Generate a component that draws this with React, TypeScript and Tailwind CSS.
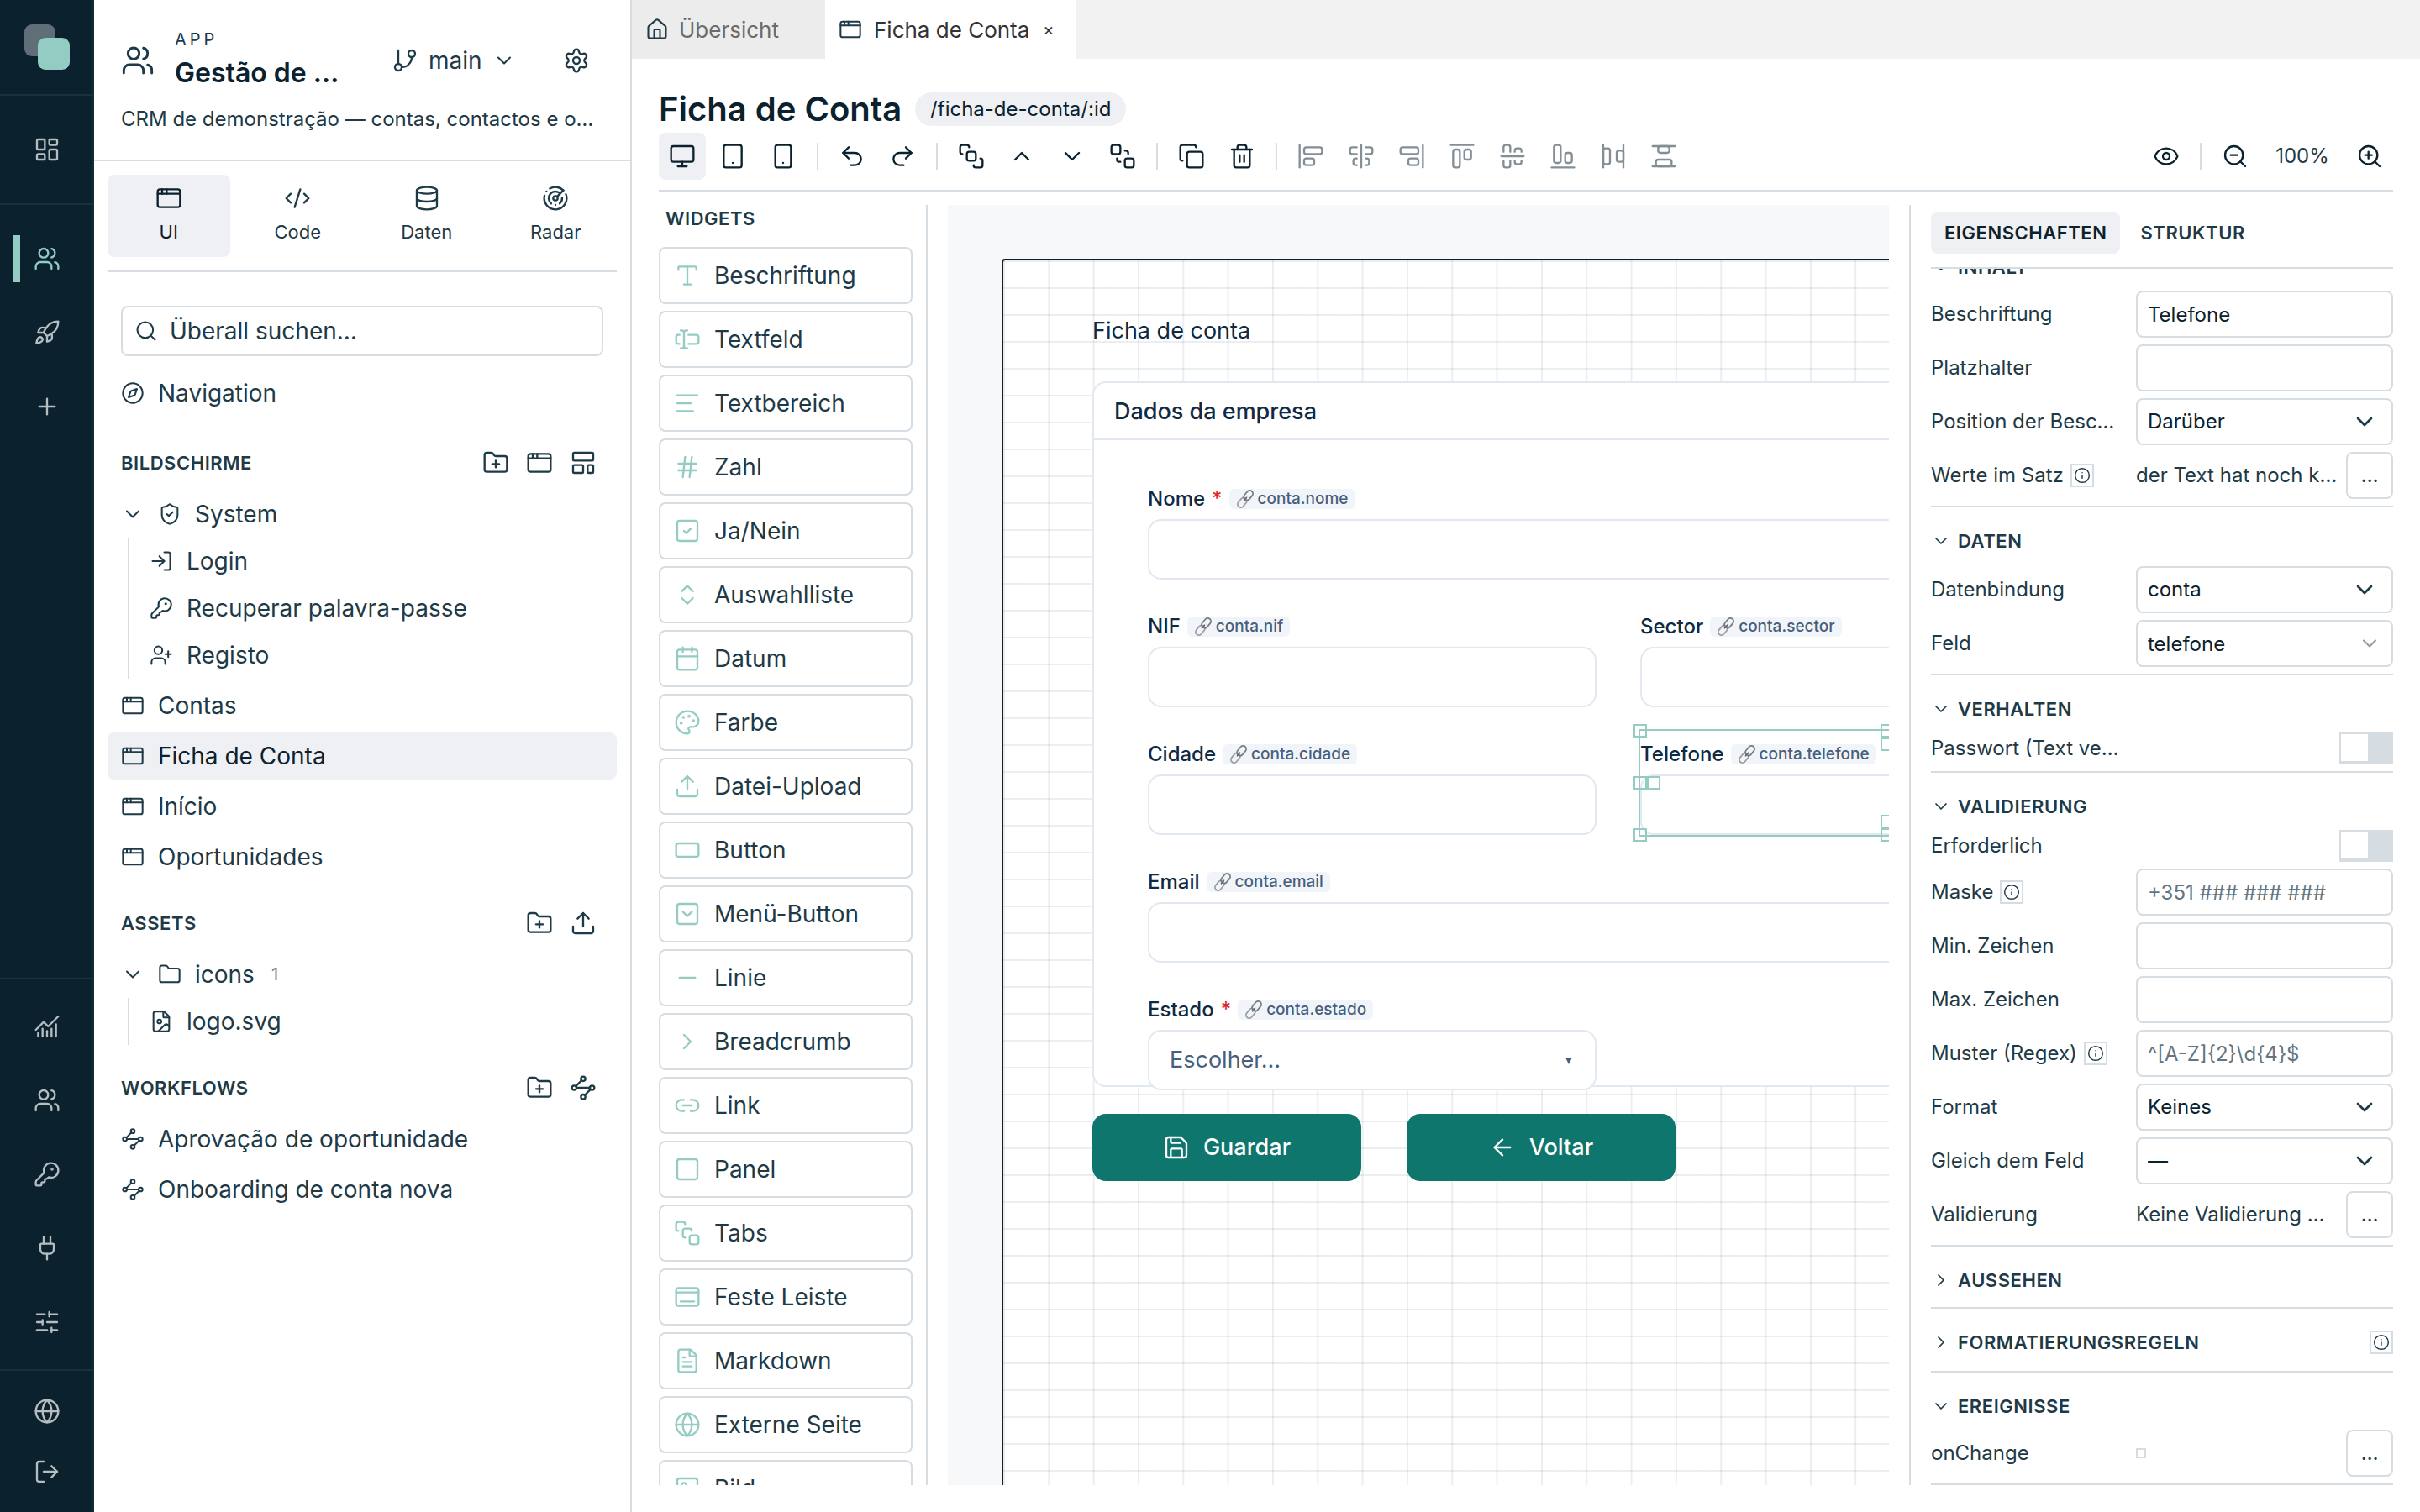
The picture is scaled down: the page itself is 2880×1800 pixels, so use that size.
import type { ReactNode } from 'react'
import {
  AlignCenterHorizontal,
  AlignCenterVertical,
  AlignEndHorizontal,
  AlignEndVertical,
  AlignHorizontalSpaceBetween,
  AlignStartHorizontal,
  AlignStartVertical,
  AlignVerticalSpaceBetween,
  AppWindow,
  ArrowLeft,
  BringToFront,
  Calendar,
  ChartNoAxesCombined,
  ChevronDown,
  ChevronRight,
  ChevronsUpDown,
  ChevronUp,
  CodeXml,
  Compass,
  Copy,
  createLucideIcon,
  Database,
  Dock,
  Eye,
  FileImage,
  FileText,
  Folder,
  FolderPlus,
  GitBranch,
  Globe,
  Hash,
  House,
  Image,
  Info,
  KeyRound,
  LayoutDashboard,
  LayoutTemplate,
  Link2,
  LogIn,
  LogOut,
  type LucideIcon,
  Minus,
  Monitor,
  Palette,
  Plug,
  Plus,
  Radar,
  RectangleHorizontal,
  Redo2,
  Rocket,
  Save,
  Search,
  SendToBack,
  Settings,
  ShieldCheck,
  SlidersHorizontal,
  Smartphone,
  Square,
  SquareCheck,
  SquareChevronDown,
  SquareStack,
  Tablet,
  TextAlignStart,
  TextCursorInput,
  Trash2,
  Type,
  Undo2,
  Upload,
  UserPlus,
  Users,
  ZoomIn,
  ZoomOut,
} from 'lucide-react'

const STROKE = 1.75

const WorkflowIcon = createLucideIcon('workflow-path', [
  ['path', { d: 'm10.586 5.414-5.172 5.172', key: 'a' }],
  ['path', { d: 'm18.586 13.414-5.172 5.172', key: 'b' }],
  ['path', { d: 'M6 12h12', key: 'c' }],
  ['circle', { cx: '12', cy: '20', r: '2', key: 'd' }],
  ['circle', { cx: '12', cy: '4', r: '2', key: 'e' }],
  ['circle', { cx: '20', cy: '12', r: '2', key: 'f' }],
  ['circle', { cx: '4', cy: '12', r: '2', key: 'g' }],
])

/* ---------- Rail ---------- */

function RailButton({ icon: Icon, label, active }: { icon: LucideIcon; label: string; active?: boolean }) {
  return (
    <button
      aria-label={label}
      className={
        active
          ? 'relative flex h-14 w-full items-center justify-center text-[#94ccc4]'
          : 'flex h-14 w-full items-center justify-center text-[#b6bdc1]'
      }
    >
      {active && <span className="absolute inset-y-0 left-4 w-2 bg-[#94ccc4]" />}
      <Icon size={32} strokeWidth={STROKE} />
    </button>
  )
}

function Rail() {
  return (
    <nav className="flex w-28 shrink-0 flex-col bg-[#0b222e] shadow-[inset_-2px_0_0_#102c39]">
      <div className="flex h-[114px] items-center justify-center border-b-2 border-[#16323f]">
        <svg width="54" height="54" viewBox="0 0 54 54" aria-hidden="true">
          <rect width="37" height="38" rx="9" fill="#606e77" />
          <rect x="16" y="16" width="38" height="38" rx="9" fill="#94ccc4" />
        </svg>
      </div>
      <div className="flex h-[130px] items-center border-b-2 border-[#16323f]">
        <RailButton icon={LayoutDashboard} label="Dashboard" />
      </div>
      <div className="flex flex-1 flex-col gap-8 pt-9">
        <RailButton icon={Users} label="Gestão de contas" active />
        <RailButton icon={Rocket} label="Deploy" />
        <RailButton icon={Plus} label="Neue App" />
      </div>
      <div className="flex flex-col gap-8 border-t-2 border-[#16323f] py-7">
        <RailButton icon={ChartNoAxesCombined} label="Statistik" />
        <RailButton icon={Users} label="Benutzer" />
        <RailButton icon={KeyRound} label="Schlüssel" />
        <RailButton icon={Plug} label="Integrationen" />
        <RailButton icon={SlidersHorizontal} label="Einstellungen" />
      </div>
      <div className="flex flex-col gap-4 border-t-2 border-[#16323f] py-5">
        <RailButton icon={Globe} label="Sprache" />
        <RailButton icon={LogOut} label="Abmelden" />
      </div>
    </nav>
  )
}

/* ---------- Sidebar ---------- */

const sidebarTabs = [
  { label: 'UI', icon: AppWindow },
  { label: 'Code', icon: CodeXml },
  { label: 'Daten', icon: Database },
  { label: 'Radar', icon: Radar },
]

function SectionHeader({ title, icons }: { title: string; icons: { icon: LucideIcon; label: string }[] }) {
  return (
    <div className="mt-6 mb-1.5 flex h-[54px] items-center justify-between pr-6 pl-4">
      <h2 className="text-[22px] font-semibold tracking-wide">{title}</h2>
      <div className="flex gap-5">
        {icons.map(({ icon: Icon, label }) => (
          <button key={label} aria-label={label}>
            <Icon size={32} strokeWidth={STROKE} />
          </button>
        ))}
      </div>
    </div>
  )
}

function TreeRow({ icon: Icon, label, active }: { icon: LucideIcon; label: string; active?: boolean }) {
  return (
    <a
      href="#"
      className={
        active
          ? 'flex h-14 items-center gap-4 rounded-lg bg-[#eff0f4] px-4 text-[#0b222e]'
          : 'flex h-14 items-center gap-4 px-4'
      }
    >
      <Icon size={28} strokeWidth={STROKE} className="text-[#1e3a47]" />
      {label}
    </a>
  )
}

function TreeFolder({ icon: Icon, label, count, children }: { icon: LucideIcon; label: string; count?: number; children: ReactNode }) {
  return (
    <div>
      <button className="flex h-14 w-full items-center gap-4 px-4">
        <ChevronDown size={28} strokeWidth={STROKE} />
        <Icon size={28} strokeWidth={STROKE} />
        {label}
        {count && <span className="ml-1 text-[20px] text-[#6b7c86]">{count}</span>}
      </button>
      <div className="ml-6 border-l-2 border-[#d5dce2] pl-2">{children}</div>
    </div>
  )
}

function Sidebar() {
  return (
    <aside className="flex w-[640px] shrink-0 flex-col border-r-2 border-[#d5dce2] text-[28px]">
      <header className="h-48 border-b-2 border-[#d5dce2] px-8 pt-8">
        <div className="flex h-20 items-center">
          <Users size={40} strokeWidth={STROKE} />
          <div className="ml-6 w-[240px]">
            <p className="mb-0.5 text-[20px] leading-7 tracking-[4px]">APP</p>
            <h1 className="text-[32px] leading-[48px] font-semibold whitespace-nowrap text-[#0b222e]">Gestão de …</h1>
          </div>
          <button className="ml-[18px] flex items-center gap-3">
            <GitBranch size={32} strokeWidth={STROKE} />
            main
            <ChevronDown size={28} strokeWidth={STROKE} />
          </button>
          <button aria-label="Einstellungen" className="mr-4 ml-auto">
            <Settings size={32} strokeWidth={STROKE} />
          </button>
        </div>
        <p className="mt-3 truncate text-[24px] leading-9">CRM de demonstração — contas, contactos e o…</p>
      </header>

      <div className="px-4 pt-4">
        <div className="grid grid-cols-4 gap-2 border-b-2 border-[#d5dce2] pb-4">
          {sidebarTabs.map(({ label, icon: Icon }, i) => (
            <button
              key={label}
              className={
                i === 0
                  ? 'flex h-[98px] flex-col items-center gap-2 rounded-lg bg-[#eff0f4] pt-3 text-[22px] leading-8 text-[#0b222e]'
                  : 'flex h-[98px] flex-col items-center gap-2 rounded-lg pt-3 text-[22px] leading-8'
              }
            >
              <Icon size={32} strokeWidth={STROKE} />
              {label}
            </button>
          ))}
        </div>

        <label className="mx-4 mt-10 mb-4 flex h-[60px] items-center gap-3.5 rounded-lg border-2 border-[#d5dce2] px-3.5">
          <Search size={28} strokeWidth={STROKE} />
          <input
            type="search"
            aria-label="Überall suchen"
            placeholder="Überall suchen…"
            className="min-w-0 flex-1 outline-none placeholder:text-[#1e3a47]"
          />
        </label>

        <div className="pb-1">
          <TreeRow icon={Compass} label="Navigation" />
        </div>

        <SectionHeader
          title="BILDSCHIRME"
          icons={[
            { icon: FolderPlus, label: 'Neuer Ordner' },
            { icon: AppWindow, label: 'Neuer Bildschirm' },
            { icon: LayoutTemplate, label: 'Neue Vorlage' },
          ]}
        />
        <div className="flex flex-col gap-1">
          <TreeFolder icon={ShieldCheck} label="System">
            <TreeRow icon={LogIn} label="Login" />
            <TreeRow icon={KeyRound} label="Recuperar palavra-passe" />
            <TreeRow icon={UserPlus} label="Registo" />
          </TreeFolder>
          <TreeRow icon={AppWindow} label="Contas" />
          <TreeRow icon={AppWindow} label="Ficha de Conta" active />
          <TreeRow icon={AppWindow} label="Início" />
          <TreeRow icon={AppWindow} label="Oportunidades" />
        </div>

        <SectionHeader
          title="ASSETS"
          icons={[
            { icon: FolderPlus, label: 'Neuer Asset-Ordner' },
            { icon: Upload, label: 'Hochladen' },
          ]}
        />
        <TreeFolder icon={Folder} label="icons" count={1}>
          <TreeRow icon={FileImage} label="logo.svg" />
        </TreeFolder>

        <SectionHeader
          title="WORKFLOWS"
          icons={[
            { icon: FolderPlus, label: 'Neuer Workflow-Ordner' },
            { icon: WorkflowIcon, label: 'Neuer Workflow' },
          ]}
        />
        <div className="flex flex-col gap-1">
          <TreeRow icon={WorkflowIcon} label="Aprovação de oportunidade" />
          <TreeRow icon={WorkflowIcon} label="Onboarding de conta nova" />
        </div>
      </div>
    </aside>
  )
}

/* ---------- Toolbar ---------- */

function ToolButton({ icon: Icon, label, active, disabled }: { icon: LucideIcon; label: string; active?: boolean; disabled?: boolean }) {
  return (
    <button
      aria-label={label}
      disabled={disabled}
      className={
        active
          ? 'flex size-14 items-center justify-center rounded-lg bg-[#eff0f4]'
          : 'flex size-14 items-center justify-center rounded-lg disabled:opacity-50'
      }
    >
      <Icon size={32} strokeWidth={STROKE} />
    </button>
  )
}

function ToolDivider() {
  return <span className="mx-2 h-8 w-0.5 bg-[#d5dce2]" />
}

function Toolbar() {
  return (
    <div className="flex items-center gap-1 border-b-2 border-[#d5dce2] pb-3 text-[#0b222e]">
      <ToolButton icon={Monitor} label="Desktop" active />
      <ToolButton icon={Tablet} label="Tablet" />
      <ToolButton icon={Smartphone} label="Mobil" />
      <ToolDivider />
      <ToolButton icon={Undo2} label="Rückgängig" />
      <ToolButton icon={Redo2} label="Wiederholen" />
      <ToolDivider />
      <ToolButton icon={BringToFront} label="In den Vordergrund" />
      <ToolButton icon={ChevronUp} label="Nach vorne" />
      <ToolButton icon={ChevronDown} label="Nach hinten" />
      <ToolButton icon={SendToBack} label="In den Hintergrund" />
      <ToolDivider />
      <ToolButton icon={Copy} label="Duplizieren" />
      <ToolButton icon={Trash2} label="Löschen" />
      <ToolDivider />
      <ToolButton icon={AlignStartVertical} label="Links ausrichten" disabled />
      <ToolButton icon={AlignCenterVertical} label="Horizontal zentrieren" disabled />
      <ToolButton icon={AlignEndVertical} label="Rechts ausrichten" disabled />
      <ToolButton icon={AlignStartHorizontal} label="Oben ausrichten" disabled />
      <ToolButton icon={AlignCenterHorizontal} label="Vertikal zentrieren" disabled />
      <ToolButton icon={AlignEndHorizontal} label="Unten ausrichten" disabled />
      <ToolButton icon={AlignHorizontalSpaceBetween} label="Horizontal verteilen" disabled />
      <ToolButton icon={AlignVerticalSpaceBetween} label="Vertikal verteilen" disabled />
      <div className="ml-auto flex items-center gap-1">
        <ToolButton icon={Eye} label="Vorschau" />
        <ToolDivider />
        <ToolButton icon={ZoomOut} label="Verkleinern" />
        <span className="w-24 text-center text-[24px] text-[#1e3a47]">100%</span>
        <ToolButton icon={ZoomIn} label="Vergrößern" />
      </div>
    </div>
  )
}

/* ---------- Widget palette ---------- */

const widgets: [string, LucideIcon][] = [
  ['Beschriftung', Type],
  ['Textfeld', TextCursorInput],
  ['Textbereich', TextAlignStart],
  ['Zahl', Hash],
  ['Ja/Nein', SquareCheck],
  ['Auswahlliste', ChevronsUpDown],
  ['Datum', Calendar],
  ['Farbe', Palette],
  ['Datei-Upload', Upload],
  ['Button', RectangleHorizontal],
  ['Menü-Button', SquareChevronDown],
  ['Linie', Minus],
  ['Breadcrumb', ChevronRight],
  ['Link', Link2],
  ['Panel', Square],
  ['Tabs', SquareStack],
  ['Feste Leiste', Dock],
  ['Markdown', FileText],
  ['Externe Seite', Globe],
  ['Bild', Image],
]

function WidgetPalette() {
  return (
    <section className="flex w-80 shrink-0 flex-col gap-2 overflow-hidden border-r-2 border-[#d5dce2] pr-4">
      <h3 className="mb-2.5 pl-2 text-[22px] leading-8 font-semibold tracking-wide">WIDGETS</h3>
      {widgets.map(([label, Icon]) => (
        <button
          key={label}
          className="flex h-[68px] shrink-0 items-center gap-4 rounded-lg border-2 border-[#d5dce2] px-4 text-[28px]"
        >
          <Icon size={32} strokeWidth={STROKE} className="text-[#94ccc4]" />
          {label}
        </button>
      ))}
    </section>
  )
}

/* ---------- Canvas ---------- */

function ChainIcon() {
  return (
    <svg width="22" height="22" viewBox="0 0 22 22" fill="none" aria-hidden="true">
      <g transform="rotate(-50 11 11)">
        <rect x="-1" y="7.25" width="13" height="7.5" rx="3.75" stroke="#9a9ea2" strokeWidth="1.8" />
        <rect x="10" y="7.25" width="13" height="7.5" rx="3.75" stroke="#787c80" strokeWidth="1.8" />
        <path d="M8.5 11h5" stroke="#5d6165" strokeWidth="1.4" strokeLinecap="round" />
      </g>
    </svg>
  )
}

function FieldLabel({ id, label, binding, required }: { id: string; label: string; binding: string; required?: boolean }) {
  return (
    <div className="mb-3 flex h-6 items-center gap-2 text-[24px] font-medium">
      <label htmlFor={id}>
        {label}
        {required && <span className="ml-2 text-[#dc2626]">*</span>}
      </label>
      <span className="flex h-6 items-center gap-1 rounded-md bg-[#f1f5f9] px-2 text-[19px] text-[#475f7c]">
        <ChainIcon />
        {binding}
      </span>
    </div>
  )
}

const inputClass = 'block h-[72px] w-full rounded-2xl border-2 border-[#e2e8f0] bg-white px-6'

function CanvasField({ id, label, required, wide, children }: { id: string; label: string; required?: boolean; wide?: boolean; children?: ReactNode }) {
  return (
    <div className={wide ? 'relative col-span-2' : 'relative'}>
      <FieldLabel id={id} label={label} binding={`conta.${id}`} required={required} />
      <input id={id} className={inputClass} />
      {children}
    </div>
  )
}

const handles = [
  '-top-2 -left-2',
  '-top-2 left-1/2 -translate-x-1/2',
  'top-2 left-1/2 -translate-x-1/2',
  '-top-2 -right-2',
  'top-1/2 -left-2 -translate-y-1/2',
  'top-1/2 left-2 -translate-y-1/2',
  'top-1/2 -right-2 -translate-y-1/2',
  '-bottom-2 -left-2',
  '-bottom-2 left-1/2 -translate-x-1/2',
  'bottom-2 left-1/2 -translate-x-1/2',
  '-bottom-2 -right-2',
]

function SelectionBox() {
  return (
    <div className="pointer-events-none absolute inset-x-0 -top-4 bottom-0 outline-2 outline-[#94ccc4]">
      {handles.map((pos) => (
        <span key={pos} className={`absolute size-4 border-2 border-[#94ccc4] ${pos}`} />
      ))}
    </div>
  )
}

function Canvas() {
  return (
    <section className="ml-6 min-w-0 flex-1 overflow-hidden bg-[#f7f8fa] pt-16 pl-16">
      {/* 36 column design surface */}
      <div className="h-[2160px] w-[1924px] rounded border-2 border-[#0b222e] bg-white bg-[linear-gradient(to_right,rgba(11,34,46,0.08)_2px,transparent_2px),linear-gradient(to_bottom,rgba(11,34,46,0.08)_2px,transparent_2px)] bg-[size:calc(100%/36)_32px] pt-16 pl-[106px] text-[27px] text-[#0f2a43]">
        <p className="mb-10 leading-10">Ficha de conta</p>

        <div className="h-[840px] w-[1306px] rounded-2xl border-2 border-[#e2e8f0] bg-white">
          <h4 className="flex h-[68px] items-center border-b-2 border-[#e2e8f0] px-6 pt-0.5 font-medium">
            Dados da empresa
          </h4>
          <div className="grid grid-cols-[534px_588px] gap-x-[52px] gap-y-11 px-16 pt-[58px]">
            <CanvasField id="nome" label="Nome" required wide />
            <CanvasField id="nif" label="NIF" />
            <CanvasField id="sector" label="Sector" />
            <CanvasField id="cidade" label="Cidade" />
            <CanvasField id="telefone" label="Telefone">
              <SelectionBox />
            </CanvasField>
            <CanvasField id="email" label="Email" wide />
            <div>
              <FieldLabel id="estado" label="Estado" binding="conta.estado" required />
              <div className="relative">
                <select
                  id="estado"
                  className="block h-[72px] w-full appearance-none rounded-2xl border-2 border-[#e2e8f0] bg-white px-6 text-[#475f7c]"
                >
                  <option>Escolher…</option>
                </select>
                <svg className="absolute top-8 right-7" width="10" height="10" viewBox="0 0 10 10" aria-hidden="true">
                  <path d="M1 1h8L5 9z" fill="#475f7c" />
                </svg>
              </div>
            </div>
          </div>
        </div>

        <div className="mt-8 flex gap-[54px] font-medium text-white">
          <button className="flex h-20 w-80 items-center justify-center gap-4 rounded-2xl bg-[#0f766e]">
            <Save size={32} strokeWidth={STROKE} />
            Guardar
          </button>
          <button className="flex h-20 w-80 items-center justify-center gap-4 rounded-2xl bg-[#0f766e]">
            <ArrowLeft size={32} strokeWidth={STROKE} />
            Voltar
          </button>
        </div>
      </div>
    </section>
  )
}

/* ---------- Properties ---------- */

function InfoButton() {
  return (
    <button aria-label="Info" className="flex size-7 shrink-0 items-center justify-center border-2 border-[#d5dce2]">
      <Info size={20} strokeWidth={STROKE} />
    </button>
  )
}

function PropRow({ id, label, info, children }: { id: string; label: string; info?: boolean; children: ReactNode }) {
  return (
    <div className="mb-2 grid grid-cols-[228px_1fr] items-center gap-4">
      <div className="flex items-center gap-2 whitespace-nowrap">
        <label htmlFor={id}>{label}</label>
        {info && <InfoButton />}
      </div>
      {children}
    </div>
  )
}

function PropInput({ id, value, placeholder }: { id: string; value?: string; placeholder?: string }) {
  return (
    <input
      id={id}
      defaultValue={value}
      placeholder={placeholder}
      className="h-14 w-full min-w-0 rounded-lg border-2 border-[#d5dce2] px-3 text-[#0b222e] placeholder:text-[#64757f]"
    />
  )
}

function PropSelect({ id, value }: { id: string; value: string }) {
  return (
    <div className="relative">
      <select id={id} className="block h-14 w-full appearance-none rounded-lg border-2 border-[#d5dce2] bg-white px-3 text-[#0b222e]">
        <option>{value}</option>
      </select>
      <ChevronDown size={32} strokeWidth={2} className="pointer-events-none absolute top-3 right-[18px]" />
    </div>
  )
}

function PropToggle({ id }: { id: string }) {
  return (
    <input
      id={id}
      type="checkbox"
      className="block h-[38px] w-16 appearance-none justify-self-end border-2 border-[#d5dce2] bg-[#d5dce2] before:block before:size-8 before:bg-white"
    />
  )
}

function PropMore({ id, children }: { id: string; children?: ReactNode }) {
  return (
    <div className="flex items-center justify-between whitespace-nowrap">
      {children}
      <button id={id} className="size-14 rounded-lg border-2 border-[#d5dce2]">
        …
      </button>
    </div>
  )
}

function PropSection({ title, children }: { title: string; children: ReactNode }) {
  return (
    <div className="border-b-2 border-[#d5dce2]">
      <button className="flex items-center gap-2 pt-6 pb-3 text-[22px] leading-8 font-semibold tracking-wide">
        <ChevronDown size={24} strokeWidth={STROKE} />
        {title}
      </button>
      {children}
    </div>
  )
}

function Properties() {
  return (
    <aside className="ml-6 flex w-[576px] shrink-0 flex-col border-l-2 border-[#d5dce2] pt-2 pl-6 text-[24px]">
      <div className="flex gap-2 border-b-2 border-[#d5dce2] pb-4 text-[22px] font-semibold tracking-wide">
        <button className="h-[50px] rounded-lg bg-[#eff0f4] px-4 text-[#0b222e]">EIGENSCHAFTEN</button>
        <button className="h-[50px] rounded-lg px-4">STRUKTUR</button>
      </div>

      <div className="min-h-0 flex-1 overflow-hidden">
        {/* list is scrolled so that the first heading is partly hidden */}
        <div className="-mt-[42px]">
          <PropSection title="INHALT">
            <PropRow id="p-label" label="Beschriftung">
              <PropInput id="p-label" value="Telefone" />
            </PropRow>
            <PropRow id="p-placeholder" label="Platzhalter">
              <PropInput id="p-placeholder" />
            </PropRow>
            <PropRow id="p-position" label="Position der Besc…">
              <PropSelect id="p-position" value="Darüber" />
            </PropRow>
            <PropRow id="p-values" label="Werte im Satz" info>
              <PropMore id="p-values">der Text hat noch k…</PropMore>
            </PropRow>
          </PropSection>

          <PropSection title="DATEN">
            <div className="pt-0.5">
              <PropRow id="p-binding" label="Datenbindung">
                <PropSelect id="p-binding" value="conta" />
              </PropRow>
            </div>
            <PropRow id="p-field" label="Feld">
              <div className="relative">
                <PropInput id="p-field" value="telefone" />
                <ChevronDown size={28} strokeWidth={STROKE} className="pointer-events-none absolute top-3.5 right-3.5 opacity-50" />
              </div>
            </PropRow>
          </PropSection>

          <PropSection title="VERHALTEN">
            <PropRow id="p-password" label="Passwort (Text ve…">
              <PropToggle id="p-password" />
            </PropRow>
          </PropSection>

          <PropSection title="VALIDIERUNG">
            <PropRow id="p-required" label="Erforderlich">
              <PropToggle id="p-required" />
            </PropRow>
            <PropRow id="p-mask" label="Maske" info>
              <PropInput id="p-mask" placeholder="+351 ### ### ###" />
            </PropRow>
            <PropRow id="p-min" label="Min. Zeichen">
              <PropInput id="p-min" />
            </PropRow>
            <PropRow id="p-max" label="Max. Zeichen">
              <PropInput id="p-max" />
            </PropRow>
            <PropRow id="p-regex" label="Muster (Regex)" info>
              <PropInput id="p-regex" placeholder="^[A-Z]{2}\d{4}$" />
            </PropRow>
            <PropRow id="p-format" label="Format">
              <PropSelect id="p-format" value="Keines" />
            </PropRow>
            <PropRow id="p-equal" label="Gleich dem Feld">
              <PropSelect id="p-equal" value="—" />
            </PropRow>
            <PropRow id="p-validation" label="Validierung">
              <PropMore id="p-validation">Keine Validierung …</PropMore>
            </PropRow>
          </PropSection>

          <button className="flex w-full items-center gap-2 border-b-2 border-[#d5dce2] pt-6 pb-4 text-[22px] leading-8 font-semibold tracking-wide">
            <ChevronRight size={24} strokeWidth={STROKE} />
            AUSSEHEN
          </button>
          <div className="flex items-center justify-between border-b-2 border-[#d5dce2] pt-6 pb-[18px]">
            <button className="flex items-center gap-2 text-[22px] leading-8 font-semibold tracking-wide">
              <ChevronRight size={24} strokeWidth={STROKE} />
              FORMATIERUNGSREGELN
            </button>
            <InfoButton />
          </div>

          <PropSection title="EREIGNISSE">
            <PropRow id="p-change" label="onChange">
              <PropMore id="p-change">
                <span className="size-3 border-2 border-[#d5dce2]" />
              </PropMore>
            </PropRow>
          </PropSection>
        </div>
      </div>
    </aside>
  )
}

/* ---------- Page ---------- */

export default function App() {
  return (
    <div className="flex h-screen overflow-hidden bg-white font-['Inter',sans-serif] text-[#1e3a47]">
      <Rail />
      <Sidebar />
      <main className="flex min-w-0 flex-1 flex-col">
        <div className="flex h-[70px] shrink-0 bg-[#f2f2f2] text-[26px]">
          <button className="flex w-[230px] items-center gap-3 bg-[#ececec] pl-4 text-[#6b6b6b]">
            <House size={28} strokeWidth={STROKE} className="text-[#1e3a47]" />
            Übersicht
          </button>
          <div className="flex w-[298px] items-center gap-3.5 bg-white pl-4 text-[#333333]">
            <AppWindow size={28} strokeWidth={STROKE} className="text-[#1e3a47]" />
            Ficha de Conta
            <button aria-label="Tab schließen" className="ml-0.5 text-[20px]">
              ×
            </button>
          </div>
        </div>

        <div className="flex min-h-0 flex-1 flex-col p-8">
          <div className="flex h-14 items-center gap-4 text-[#0b222e]">
            <h1 className="text-[40px] font-semibold">Ficha de Conta</h1>
            <span className="flex h-10 items-center rounded-full bg-[#eff0f4] px-[18px] text-[24px]">
              /ficha-de-conta/:id
            </span>
          </div>
          <Toolbar />
          <div className="mt-4 flex min-h-0 flex-1">
            <WidgetPalette />
            <Canvas />
            <Properties />
          </div>
        </div>
      </main>
    </div>
  )
}
